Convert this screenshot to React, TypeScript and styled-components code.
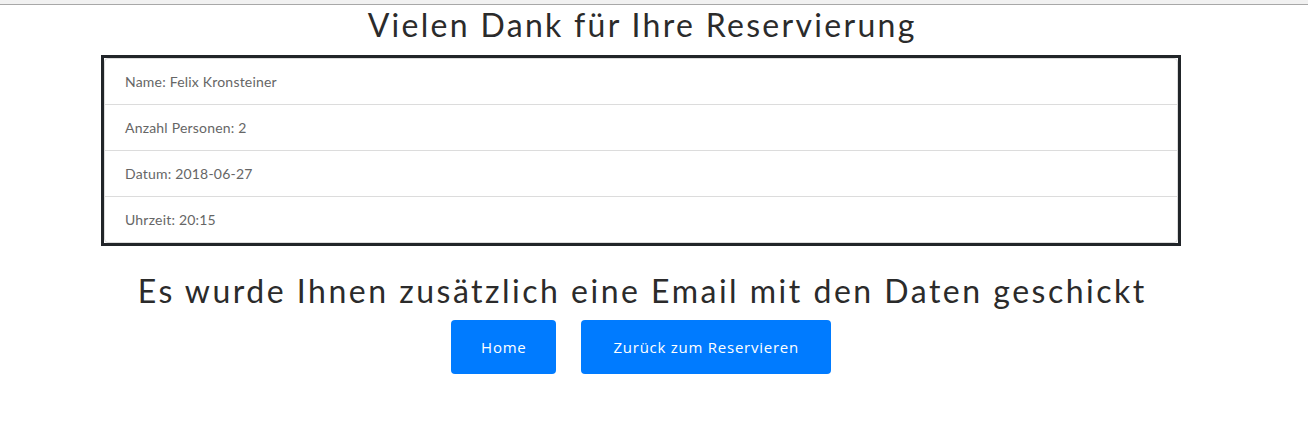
import React from "react";
import styled, { createGlobalStyle } from "styled-components";

const Global = createGlobalStyle`
  html, body { margin: 0; padding: 0; background: #fff; }
  body { font-family: Lato, "Open Sans", sans-serif; }
`;

const Page = styled.div`
  width: 1282px;
  display: flex;
  flex-direction: column;
  align-items: center;
`;

const TopBar = styled.div`
  align-self: stretch;
  width: 1308px;
  height: 4px;
  background: #f1f1f1;
  border-bottom: 1px solid #a8a8a8;
`;

const Heading = styled.h2<{ $gapTop: number; $spacing: number }>`
  margin: ${(p) => p.$gapTop}px 0 0;
  padding-left: ${(p) => p.$spacing}px;
  font-family: Lato, sans-serif;
  font-weight: 400;
  font-size: 32px;
  letter-spacing: ${(p) => p.$spacing}px;
  line-height: 38px;
  color: #2b2b2b;
  text-align: center;
`;

const Frame = styled.div`
  width: 1074px;
  margin-top: 11px;
  border: 3px solid #212529;
`;

const List = styled.ul`
  list-style: none;
  margin: 0;
  padding: 0;
  border: 1px solid #dcdcdc;
  border-radius: 4px;
`;

const Item = styled.li`
  height: 45px;
  padding: 0 20px;
  display: flex;
  align-items: center;
  font-family: Lato, sans-serif;
  font-size: 14px;
  letter-spacing: 0.2px;
  color: #666;
  & + & {
    border-top: 1px solid #dcdcdc;
  }
`;

const Actions = styled.div`
  display: flex;
  gap: 25px;
  margin-top: 10px;
`;

const Button = styled.button<{ $pad: number }>`
  height: 54px;
  padding: 0 ${(p) => p.$pad}px;
  border: none;
  border-radius: 4px;
  background: #007bff;
  color: #fff;
  font-family: "Open Sans", sans-serif;
  font-size: 15px;
  letter-spacing: 0.75px;
  cursor: pointer;
`;

export default function App() {
  const rows = [
    "Name: Felix Kronsteiner",
    "Anzahl Personen: 2",
    "Datum: 2018-06-27",
    "Uhrzeit: 20:15",
  ];
  return (
    <>
      <Global />
      <Page>
        <TopBar />
        <Heading $gapTop={1} $spacing={2.3}>
          Vielen Dank für Ihre Reservierung
        </Heading>
        <Frame>
          <List>
            {rows.map((r) => (
              <Item key={r}>{r}</Item>
            ))}
          </List>
        </Frame>
        <Heading $gapTop={26} $spacing={2.5}>
          Es wurde Ihnen zusätzlich eine Email mit den Daten geschickt
        </Heading>
        <Actions>
          <Button $pad={30}>Home</Button>
          <Button $pad={32}>Zurück zum Reservieren</Button>
        </Actions>
      </Page>
    </>
  );
}
